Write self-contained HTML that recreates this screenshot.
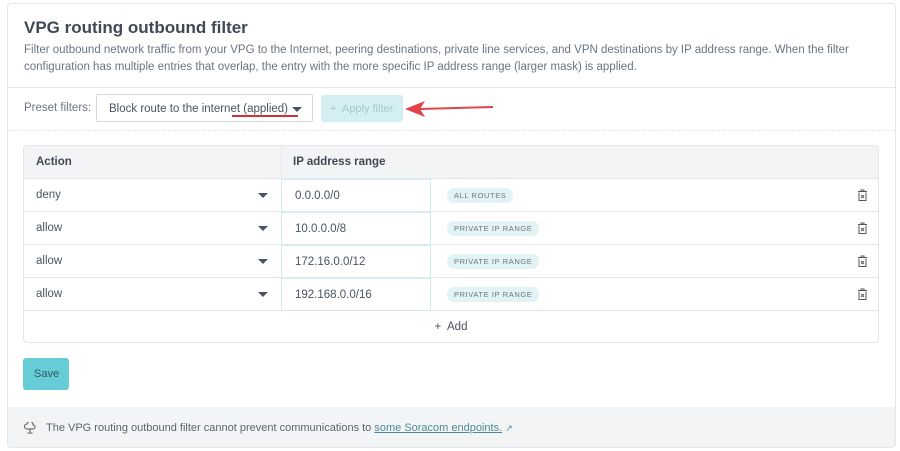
<!DOCTYPE html><html><head><style>
*{box-sizing:border-box;margin:0;padding:0}
body{width:900px;height:451px;background:#fff;font-family:"Liberation Sans",sans-serif;color:#4a5360;position:relative;overflow:hidden}
.card{position:absolute;left:7px;top:3px;width:889px;height:445px;border:1px solid #e3e6ea;border-radius:4px;overflow:hidden}
h1{position:absolute;left:16px;top:14px;font-size:17px;font-weight:bold;color:#3f4955}
.desc{position:absolute;left:16px;top:38px;width:860px;font-size:11.5px;line-height:17px;color:#6b7580}
.hr{position:absolute;left:0;top:83px;width:100%;border-top:1px solid #e3e6ea}
.dash{position:absolute;left:0;top:126px;width:100%;border-top:1px dashed #e6e8eb}
.lbl{position:absolute;left:16px;top:98px;font-size:11.5px;color:#6b7580}
.sel{position:absolute;left:88px;top:90px;width:217px;height:28px;border:1px solid #d5d9de;border-radius:2px;font-size:11.5px;padding:8px 0 0 12px;color:#4a5360}
.tri{position:absolute;width:0;height:0;border-left:5px solid transparent;border-right:5px solid transparent;border-top:5px solid #4a5360}
.apply{position:absolute;left:313px;top:91px;width:82px;height:27px;background:#d3eff2;border-radius:3px;color:#aac6cb;font-size:11px;padding:8px 0 0 9px}
.tbl{position:absolute;left:15px;top:141px;width:856px;height:198px;border:1px solid #e3e6ea;border-radius:4px;overflow:hidden}
.th{position:absolute;left:0;top:0;width:100%;height:33px;background:#f3f4f6;border-bottom:1px solid #e3e6ea;font-weight:bold;font-size:11.5px;color:#3f4955}
.row{position:absolute;left:0;width:100%;height:33px;border-bottom:1px solid #e3e6ea;font-size:11.5px}
.ip{position:absolute;left:257px;top:0;width:150px;height:33px;border:1.5px solid #d4ecef;padding:10px 0 0 13px}
.tag{position:absolute;left:423px;top:9px;height:15px;border-radius:7px;background:#e2f3f5;font-size:7.5px;letter-spacing:.6px;color:#6b7580;padding:3px 7px 0}
.trash{position:absolute;right:10px;top:10px}
.save{position:absolute;left:15px;top:354px;width:46px;height:32px;background:#66ccd6;border-radius:3px;font-size:11px;color:#2e5a61;padding:10px 0 0 11px}
.foot{position:absolute;left:0;top:403px;width:100%;height:42px;background:#f3f4f6;font-size:11px;color:#5a6470;padding:15px 0 0 38px}
.foot a{color:#4a8b96;text-decoration:underline}
</style></head><body>
<div class="card">
<h1>VPG routing outbound filter</h1>
<div class="desc">Filter outbound network traffic from your VPG to the Internet, peering destinations, private line services, and VPN destinations by IP address range. When the filter configuration has multiple entries that overlap, the entry with the more specific IP address range (larger mask) is applied.</div>
<div class="hr"></div>
<div class="lbl">Preset filters:</div>
<div class="sel">Block route to the internet (applied)<div class="tri" style="left:195px;top:12px"></div></div>
<div style="position:absolute;left:224px;top:111px;width:66px;height:2px;background:#d0323a"></div>
<div class="apply">+&nbsp; Apply filter</div>
<svg style="position:absolute;left:397px;top:94px" width="90" height="22"><line x1="14" y1="11" x2="88" y2="9" stroke="#e0434a" stroke-width="2"/><polygon points="0,11 20,3 15,11 20,19" fill="#e0434a"/></svg>
<div class="dash"></div>
<div class="tbl">
<div class="th"><span style="position:absolute;left:12px;top:10px">Action</span><span style="position:absolute;left:257px;top:0;height:32px;border-left:1px solid #e3e6ea;padding:10px 0 0 11px">IP address range</span></div>
<div class="row" style="top:33px"><span style="position:absolute;left:12px;top:10px">deny</span><div class="tri" style="left:234px;top:14px"></div><div class="ip">0.0.0.0/0</div><div class="tag">ALL ROUTES</div><svg class="trash" width="11" height="12" viewBox="0 0 11 12" fill="none" stroke="#555" stroke-width="1"><path d="M1 2.5h9M4 2.5V1h3v1.5M2 3.5v8h7v-8M4 6l3 3M7 6l-3 3"/></svg></div>
<div class="row" style="top:66px"><span style="position:absolute;left:12px;top:10px">allow</span><div class="tri" style="left:234px;top:14px"></div><div class="ip">10.0.0.0/8</div><div class="tag">PRIVATE IP RANGE</div><svg class="trash" width="11" height="12" viewBox="0 0 11 12" fill="none" stroke="#555" stroke-width="1"><path d="M1 2.5h9M4 2.5V1h3v1.5M2 3.5v8h7v-8M4 6l3 3M7 6l-3 3"/></svg></div>
<div class="row" style="top:99px"><span style="position:absolute;left:12px;top:10px">allow</span><div class="tri" style="left:234px;top:14px"></div><div class="ip">172.16.0.0/12</div><div class="tag">PRIVATE IP RANGE</div><svg class="trash" width="11" height="12" viewBox="0 0 11 12" fill="none" stroke="#555" stroke-width="1"><path d="M1 2.5h9M4 2.5V1h3v1.5M2 3.5v8h7v-8M4 6l3 3M7 6l-3 3"/></svg></div>
<div class="row" style="top:132px"><span style="position:absolute;left:12px;top:10px">allow</span><div class="tri" style="left:234px;top:14px"></div><div class="ip">192.168.0.0/16</div><div class="tag">PRIVATE IP RANGE</div><svg class="trash" width="11" height="12" viewBox="0 0 11 12" fill="none" stroke="#555" stroke-width="1"><path d="M1 2.5h9M4 2.5V1h3v1.5M2 3.5v8h7v-8M4 6l3 3M7 6l-3 3"/></svg></div>
<div style="position:absolute;left:0;top:165px;width:100%;text-align:center;padding-top:10px;font-size:11.5px;color:#4a5360">+&nbsp; Add</div>
</div>
<div class="save">Save</div>
<div class="foot"><svg style="position:absolute;left:16px;top:15px" width="12" height="12" viewBox="0 0 12 12" fill="none" stroke="#555" stroke-width="1"><path d="M3 7a2.5 2.5 0 0 1 0-5 3 3 0 0 1 6 1 2 2 0 0 1 0 4zM6 7v3M3.5 11h5"/></svg>The VPG routing outbound filter cannot prevent communications to <a>some Soracom endpoints.</a> <span style="color:#4a8b96;font-size:9px">↗</span></div>
</div>
</body></html>
